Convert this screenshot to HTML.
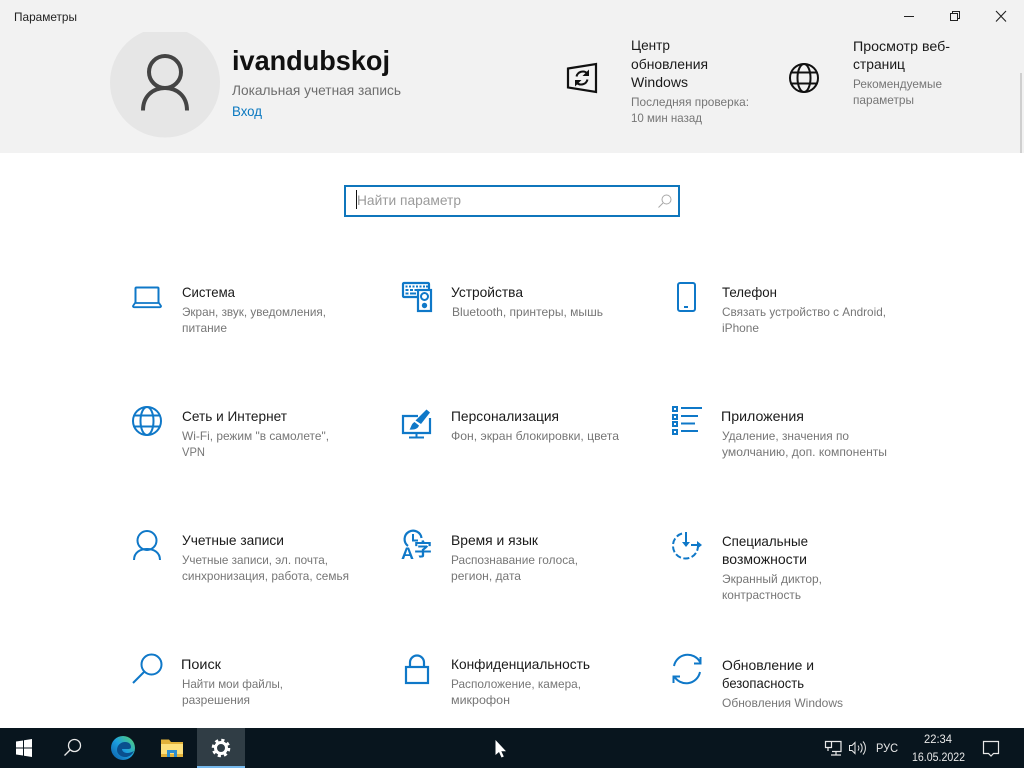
<!DOCTYPE html>
<html lang="ru"><head><meta charset="utf-8"><title>Параметры</title>
<style>
html,body{margin:0;padding:0;width:1024px;height:768px;overflow:hidden;background:#fff}
svg{display:block}
text{font-family:"Liberation Sans","DejaVu Sans",sans-serif;white-space:pre}
.h{font-size:14px;fill:#1a1a1a}
.s{font-size:12px;fill:#767676}
.i{fill:none;stroke:#0f78c8;stroke-width:2}
.f{fill:#0f78c8}
.t{fill:none;stroke:#e8e8e8;stroke-width:1.2}
.w{font-size:12px;fill:#e8e8e8}
</style></head><body>
<svg width="1024" height="768" viewBox="0 0 1024 768" xmlns="http://www.w3.org/2000/svg">
<defs>
<clipPath id="av"><rect x="100" y="32" width="130" height="110"/></clipPath>
<linearGradient id="edge" x1="0" y1="1" x2="1" y2="0"><stop offset="0" stop-color="#0b5aa6"/><stop offset=".5" stop-color="#1c9fe0"/><stop offset="1" stop-color="#5ad66a"/></linearGradient>
</defs>
<rect width="1024" height="768" fill="#fff"/>
<rect width="1024" height="153" fill="#f2f2f2"/>
<rect x="1020" y="73" width="2" height="80" fill="#cfcfcf"/>

<text x="14" y="21" font-size="12" fill="#222" textLength="63" lengthAdjust="spacingAndGlyphs">Параметры</text>
<path d="M904 16.500h10" stroke="#222" fill="none"/>
<path d="M950.500 13.500h7v7h-7zM952.500 13.500v-2h7v7h-2" stroke="#222" fill="none"/>
<path d="M996 11l10 10.500M1006 11l-10 10.500" stroke="#222" fill="none" stroke-width="1.100"/>

<circle cx="165" cy="82.500" r="55" fill="#e6e6e6" clip-path="url(#av)"/>
<circle cx="165" cy="72" r="16" fill="none" stroke="#444" stroke-width="4"/>
<path d="M143 110.500C143 96 153 88 165 88S187 96 187 110.500" fill="none" stroke="#444" stroke-width="4"/>
<text x="232" y="70" font-size="28" font-weight="700" fill="#111" textLength="158" lengthAdjust="spacingAndGlyphs">ivandubskoj</text>
<text x="232" y="95" class="h" style="fill:#6e6e6e" textLength="169" lengthAdjust="spacingAndGlyphs">Локальная учетная запись</text>
<text x="232" y="116" class="h" style="fill:#0a78c0" textLength="30" lengthAdjust="spacingAndGlyphs">Вход</text>

<path d="M568 68.500L596 64V92L568 87.500Z" fill="none" stroke="#111" stroke-width="2.200"/>
<path d="M576.500 76.500a6.500 6.500 0 0 1 11-3M587.500 79.500a6.500 6.500 0 0 1 -11 3" fill="none" stroke="#111" stroke-width="2"/>
<path d="M589 69.500v6.500h-6.500zM575 86.500v-6.500h6.500z" fill="#111"/>
<text x="631" y="50" class="h" textLength="39" lengthAdjust="spacingAndGlyphs">Центр</text>
<text x="631" y="69" class="h" textLength="77" lengthAdjust="spacingAndGlyphs">обновления</text>
<text x="631" y="87" class="h" textLength="57" lengthAdjust="spacingAndGlyphs">Windows</text>
<text x="631" y="106" class="s" textLength="118" lengthAdjust="spacingAndGlyphs">Последняя проверка:</text>
<text x="631" y="122" class="s" textLength="71" lengthAdjust="spacingAndGlyphs">10 мин назад</text>

<g fill="none" stroke="#111" stroke-width="2"><circle cx="804" cy="78" r="14"/><ellipse cx="804" cy="78" rx="6.500" ry="14"/><path d="M791.500 72.500h25M791.500 83.500h25"/></g>
<text x="853" y="51" class="h" textLength="97" lengthAdjust="spacingAndGlyphs">Просмотр веб-</text>
<text x="853" y="69" class="h" textLength="52" lengthAdjust="spacingAndGlyphs">страниц</text>
<text x="853" y="88" class="s" textLength="89" lengthAdjust="spacingAndGlyphs">Рекомендуемые</text>
<text x="853" y="104" class="s" textLength="61" lengthAdjust="spacingAndGlyphs">параметры</text>

<rect x="345" y="186" width="334" height="30" fill="#fff" stroke="#0f76bc" stroke-width="2"/>
<rect x="356" y="190" width="1" height="19" fill="#111"/>
<text x="357" y="205" class="h" style="fill:#9a9a9a" textLength="104" lengthAdjust="spacingAndGlyphs">Найти параметр</text>
<circle cx="666.500" cy="199.500" r="4.500" fill="none" stroke="#a8a8a8"/>
<path d="M663 203l-4.500 4.500" stroke="#a8a8a8" fill="none"/>

<!-- Row 1 -->
<path class="i" d="M135.500 303V288.500a1 1 0 0 1 1-1h21a1 1 0 0 1 1 1V303"/>
<path class="i" d="M135 303h24l2 3a1 1 0 0 1-1 1.200h-26a1 1 0 0 1-1-1.200z" style="stroke-width:1.800"/>
<text x="182" y="297" class="h" textLength="53" lengthAdjust="spacingAndGlyphs">Система</text>
<text x="182" y="316" class="s" textLength="144" lengthAdjust="spacingAndGlyphs">Экран, звук, уведомления,</text>
<text x="182" y="332" class="s" textLength="45" lengthAdjust="spacingAndGlyphs">питание</text>

<path class="i" d="M417 297h-13a1 1 0 0 1-1-1v-12a1 1 0 0 1 1-1h24a1 1 0 0 1 1 1v5" style="stroke-width:2.200"/>
<path class="f" d="M405.500 285.500h2v2h-2zM409 285.500h2v2h-2zM412.500 285.500h2v2h-2zM416 285.500h2v2h-2zM419.500 285.500h2v2h-2zM423 285.500h2v2h-2zM426 285.500h2v2h-2zM405.500 289h3v2h-3zM410 289h3v2h-3zM414.500 289h2.500v2h-2.500zM405.500 292.500h3v2h-3zM410 292.500h6v2h-6z"/>
<rect x="418" y="290" width="13" height="21" fill="#fff" stroke="#0f78c8" stroke-width="2.200"/>
<circle cx="424.500" cy="296.500" r="3.500" fill="none" stroke="#0f78c8" stroke-width="2"/><circle cx="424.500" cy="305.500" r="2.700" class="f"/>
<text x="451" y="297" class="h" textLength="72" lengthAdjust="spacingAndGlyphs">Устройства</text>
<text x="452" y="316" class="s" textLength="151" lengthAdjust="spacingAndGlyphs">Bluetooth, принтеры, мышь</text>

<rect x="678" y="283" width="17" height="28" rx="2" class="i"/><rect x="684" y="306" width="4" height="2" class="f"/>
<text x="722" y="297" class="h" textLength="55" lengthAdjust="spacingAndGlyphs">Телефон</text>
<text x="722" y="316" class="s" textLength="164" lengthAdjust="spacingAndGlyphs">Связать устройство с Android,</text>
<text x="722" y="332" class="s" textLength="37" lengthAdjust="spacingAndGlyphs">iPhone</text>

<!-- Row 2 -->
<g class="i"><circle cx="147" cy="421" r="14"/><ellipse cx="147" cy="421" rx="6.500" ry="14"/><path d="M134.500 415.500h25M134.500 426.500h25"/></g>
<text x="182" y="421" class="h" textLength="105" lengthAdjust="spacingAndGlyphs">Сеть и Интернет</text>
<text x="182" y="440" class="s" textLength="147" lengthAdjust="spacingAndGlyphs">Wi-Fi, режим "в самолете",</text>
<text x="182" y="456" class="s" textLength="23" lengthAdjust="spacingAndGlyphs">VPN</text>

<path class="i" d="M418 416h-15v17h27v-15" style="stroke-width:2.200"/>
<path class="i" d="M416.500 434v3.500M409 437.500h15"/>
<path d="M426.500 409.500l3.500 3-9 11.500-5.500-3.500zM414.500 422l4.500 3.500c-1 3-4 4.500-9.500 4 1.500-1.500 1.500-5.500 5-7.500z" class="f"/>
<text x="451" y="421" class="h" textLength="108" lengthAdjust="spacingAndGlyphs">Персонализация</text>
<text x="451" y="440" class="s" textLength="168" lengthAdjust="spacingAndGlyphs">Фон, экран блокировки, цвета</text>

<path class="f" d="M672 406h6v6h-6zM672 414h6v6h-6zM672 421h6v6h-6zM672 429h6v6h-6z"/>
<path fill="#fff" d="M674 408h2v2h-2zM674 416h2v2h-2zM674 423h2v2h-2zM674 431h2v2h-2z"/>
<path class="i" d="M681 408h21M681 416h17M681 423.500h14M681 431h17"/>
<text x="721" y="421" class="h" textLength="83" lengthAdjust="spacingAndGlyphs">Приложения</text>
<text x="722" y="440" class="s" textLength="127" lengthAdjust="spacingAndGlyphs">Удаление, значения по</text>
<text x="722" y="456" class="s" textLength="165" lengthAdjust="spacingAndGlyphs">умолчанию, доп. компоненты</text>

<!-- Row 3 -->
<circle cx="147" cy="540.500" r="9.500" class="i"/>
<path class="i" d="M134 560c0-7.500 6-11 13-11s13 3.500 13 11"/>
<text x="182" y="545" class="h" textLength="102" lengthAdjust="spacingAndGlyphs">Учетные записи</text>
<text x="182" y="564" class="s" textLength="146" lengthAdjust="spacingAndGlyphs">Учетные записи, эл. почта,</text>
<text x="182" y="580" class="s" textLength="167" lengthAdjust="spacingAndGlyphs">синхронизация, работа, семья</text>

<path class="i" d="M408 546a8.500 8.500 0 1 1 13.500-8" style="stroke-width:2.200"/><path class="i" d="M413 534v6.500h5"/>
<text x="401" y="559" font-size="17" font-weight="700" fill="#0f78c8" textLength="13" lengthAdjust="spacingAndGlyphs">A</text>
<text x="414" y="556" font-size="18" font-weight="700" fill="#0f78c8" style="font-family:'Noto Sans CJK SC','Liberation Sans',sans-serif">字</text>
<text x="451" y="545" class="h" textLength="87" lengthAdjust="spacingAndGlyphs">Время и язык</text>
<text x="451" y="564" class="s" textLength="127" lengthAdjust="spacingAndGlyphs">Распознавание голоса,</text>
<text x="451" y="580" class="s" textLength="70" lengthAdjust="spacingAndGlyphs">регион, дата</text>

<path class="i" d="M682 533.500a12.500 12.500 0 0 0-9 12.500c0 7 5.500 12.500 12.500 12.500s12.500-5.500 12.500-12.500" stroke-dasharray="6 2.500"/>
<path class="i" d="M686 532v14M691 545h9"/>
<path class="f" d="M682 542h8l-4 5zM697 541l5 4-5 4z"/>
<text x="722" y="546" class="h" textLength="86" lengthAdjust="spacingAndGlyphs">Специальные</text>
<text x="722" y="564" class="h" textLength="85" lengthAdjust="spacingAndGlyphs">возможности</text>
<text x="722" y="583" class="s" textLength="100" lengthAdjust="spacingAndGlyphs">Экранный диктор,</text>
<text x="722" y="599" class="s" textLength="79" lengthAdjust="spacingAndGlyphs">контрастность</text>

<!-- Row 4 -->
<circle cx="151.500" cy="664.500" r="10" class="i"/>
<path class="i" d="M144 672l-11 11"/>
<text x="181" y="669" class="h" textLength="40" lengthAdjust="spacingAndGlyphs">Поиск</text>
<text x="182" y="688" class="s" textLength="101" lengthAdjust="spacingAndGlyphs">Найти мои файлы,</text>
<text x="182" y="704" class="s" textLength="68" lengthAdjust="spacingAndGlyphs">разрешения</text>

<rect x="406" y="667" width="22" height="16" class="i" style="stroke-width:2.200"/>
<path class="i" d="M410 667v-4.500a7 7 0 0 1 14 0V667" style="stroke-width:2.200"/>
<text x="451" y="669" class="h" textLength="139" lengthAdjust="spacingAndGlyphs">Конфиденциальность</text>
<text x="451" y="688" class="s" textLength="130" lengthAdjust="spacingAndGlyphs">Расположение, камера,</text>
<text x="451" y="704" class="s" textLength="59" lengthAdjust="spacingAndGlyphs">микрофон</text>

<path class="i" d="M674 666a14 14 0 0 1 26-4M700 672a14 14 0 0 1-26 4"/>
<path class="f" d="M701.500 657v7.500h-7.500v-2h5.500v-5.500zM672.500 683v-7.500h7.500v2h-5.500v5.500z"/>
<text x="722" y="670" class="h" textLength="92" lengthAdjust="spacingAndGlyphs">Обновление и</text>
<text x="722" y="688" class="h" textLength="82" lengthAdjust="spacingAndGlyphs">безопасность</text>
<text x="722" y="707" class="s" textLength="121" lengthAdjust="spacingAndGlyphs">Обновления Windows</text>

<!-- Taskbar -->
<rect y="728" width="1024" height="40" fill="#08151e"/>
<rect x="197" y="728" width="48" height="40" fill="#303d45"/>
<rect x="197" y="766" width="48" height="2" fill="#76b9ed"/>
<path fill="#fff" d="M16 741.500l7-1v7h-7zM24 740.300l8-1.300v8.500h-8zM16 748.500h7v7l-7-1zM24 748.500h8V757l-8-1.300z"/>
<circle cx="74.500" cy="745.500" r="6" fill="none" stroke="#e8e8e8" stroke-width="1.300"/>
<path d="M70 750l-5.500 5.500" stroke="#e8e8e8" stroke-width="1.300" fill="none"/>

<circle cx="123" cy="748" r="12" fill="url(#edge)"/>
<path d="M117 750c0-5 4-8 8-8 4 0 6 2 6 5 0 1.500-1 2-3 2h-6c0 2 2 4 5 4 3 0 5-1 7-2-2 4-5 6-9 6-4 0-8-3-8-7z" fill="#0a4f8e"/>

<path d="M161 739.500h8l2 2.500h12v3h-22z" fill="#e2b23a"/>
<rect x="161" y="744" width="22" height="13" fill="#fde07c"/>
<rect x="161" y="754" width="22" height="3" fill="#e2b23a"/>
<path d="M167 757v-7h10v7h-3v-4h-4v4z" fill="#2f8fd0"/>

<circle cx="221" cy="748" r="5.500" fill="none" stroke="#fff" stroke-width="3"/>
<circle cx="221" cy="748" r="7.800" fill="none" stroke="#fff" stroke-width="3" stroke-dasharray="3.100 3.030"/>

<path d="M495.500 740v15l3.500-3 2.500 5.500 2.300-1-2.500-5.300h4.700z" fill="#fff"/>

<g class="t"><path d="M832 741.500h9v10h-9M825.500 741.500h6v6h-6zM828 748v3M836 751.500v3M831 755h10"/></g>
<path class="t" d="M849.500 745.500h2.500l3-3v11l-3-3h-2.500zM858 745.500a4 4 0 0 1 0 5M860.500 743.500a7 7 0 0 1 0 9M863 741.500a10 10 0 0 1 0 13" style="stroke-width:1"/>
<text x="876" y="752" class="w" textLength="22" lengthAdjust="spacingAndGlyphs">РУС</text>
<text x="924" y="743" class="w" textLength="28" lengthAdjust="spacingAndGlyphs">22:34</text>
<text x="912" y="761" class="w" textLength="53" lengthAdjust="spacingAndGlyphs">16.05.2022</text>
<path class="t" d="M983.500 741.500h15v12h-5l-2.500 2.500-2.500-2.500h-5z"/>
</svg>
</body></html>
